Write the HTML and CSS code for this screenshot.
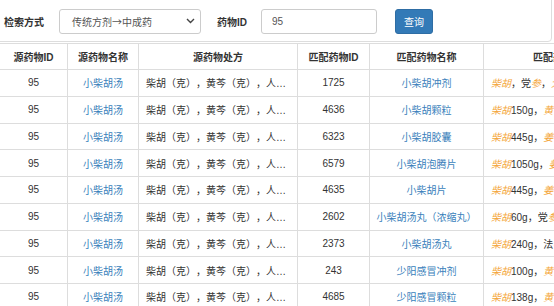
FILE: index.html
```html
<!doctype html>
<html>
<head>
<meta charset="utf-8">
<link rel="stylesheet" href="styles.css">
</head>
<body>
<div class="search-panel">
	<label class="lbl">检索方式</label>
	<div class="sel">
		<span>传统方剂→中成药</span>
		<svg width="9" height="6" viewBox="0 0 9 6"><path d="M1 1l3.5 3.5L8 1" fill="none" stroke="#444" stroke-width="1.4"/></svg>
	</div>
	<label class="lbl lbl-id">药物ID</label>
	<div class="ipt">95</div>
	<button class="btn">查询</button>
</div>
<table class="list">
	<colgroup>
		<col style="width:68px"><col style="width:71px"><col style="width:159px"><col style="width:72px"><col style="width:114px"><col style="width:159px">
	</colgroup>
	<thead>
		<tr><th>源药物ID</th><th>源药物名称</th><th>源药物处方</th><th>匹配药物ID</th><th>匹配药物名称</th><th>匹配药物处方</th></tr>
	</thead>
	<tbody>
		<tr><td>95</td><td><a>小柴胡汤</a></td><td class="rx">柴胡（克），黄芩（克），人参（克），甘草（克），半夏（克）</td><td>1725</td><td><a>小柴胡冲剂</a></td><td class="rx"><em>柴胡</em>，党<em>参</em>，<em>大枣</em>，<em>甘草</em></td></tr>
		<tr><td>95</td><td><a>小柴胡汤</a></td><td class="rx">柴胡（克），黄芩（克），人参（克），甘草（克），半夏（克）</td><td>4636</td><td><a>小柴胡颗粒</a></td><td class="rx"><em>柴胡</em>150g，<em>黄芩</em>56g</td></tr>
		<tr><td>95</td><td><a>小柴胡汤</a></td><td class="rx">柴胡（克），黄芩（克），人参（克），甘草（克），半夏（克）</td><td>6323</td><td><a>小柴胡胶囊</a></td><td class="rx"><em>柴胡</em>445g，<em>姜半夏</em></td></tr>
		<tr><td>95</td><td><a>小柴胡汤</a></td><td class="rx">柴胡（克），黄芩（克），人参（克），甘草（克），半夏（克）</td><td>6579</td><td><a>小柴胡泡腾片</a></td><td class="rx"><em>柴胡</em>1050g，<em>姜半夏</em></td></tr>
		<tr><td>95</td><td><a>小柴胡汤</a></td><td class="rx">柴胡（克），黄芩（克），人参（克），甘草（克），半夏（克）</td><td>4635</td><td><a>小柴胡片</a></td><td class="rx"><em>柴胡</em>445g，<em>姜半夏</em></td></tr>
		<tr><td>95</td><td><a>小柴胡汤</a></td><td class="rx">柴胡（克），黄芩（克），人参（克），甘草（克），半夏（克）</td><td>2602</td><td class="tight"><a>小柴胡汤丸（浓缩丸）</a></td><td class="rx"><em>柴胡</em>60g，党<em>参</em></td></tr>
		<tr><td>95</td><td><a>小柴胡汤</a></td><td class="rx">柴胡（克），黄芩（克），人参（克），甘草（克），半夏（克）</td><td>2373</td><td><a>小柴胡汤丸</a></td><td class="rx"><em>柴胡</em>240g，法<em>半夏</em></td></tr>
		<tr><td>95</td><td><a>小柴胡汤</a></td><td class="rx">柴胡（克），黄芩（克），人参（克），甘草（克），半夏（克）</td><td>243</td><td><a>少阳感冒冲剂</a></td><td class="rx"><em>柴胡</em>100g，<em>黄芩</em></td></tr>
		<tr><td>95</td><td><a>小柴胡汤</a></td><td class="rx">柴胡（克），黄芩（克），人参（克），甘草（克），半夏（克）</td><td>4685</td><td><a>少阳感冒颗粒</a></td><td class="rx"><em>柴胡</em>138g，<em>黄芩</em></td></tr>
	</tbody>
</table>
</body>
</html>
```
FILE: styles.css
```css
* {margin:0; padding:0; box-sizing:border-box;}
body {font-family:"Liberation Sans","Noto Sans CJK SC",sans-serif; font-size:10px; color:#333; background:#fff; overflow:hidden;}

.search-panel {display:flex; align-items:center; width:562px; height:52px; margin:-10px 0 0 -10px; padding:10px 0 0 13px; border:1px solid #ddd; border-radius:4px;}
.lbl {font-weight:bold; color:#333; width:40px;}
.lbl-id {margin-left:16px; width:34px;}
.sel {display:flex; align-items:center; justify-content:space-between; width:142px; height:25px; margin-left:15px; padding:0 5px 0 12px; border:1px solid #ccc; border-radius:3px; color:#555; font-family:"Noto Sans CJK SC",sans-serif;}
.ipt {width:116px; height:25px; line-height:23px; margin-left:10px; padding:0 10px; border:1px solid #ccc; border-radius:3px; color:#555;}
.btn {width:38px; height:25px; margin-left:18px; border:1px solid #2e6da4; border-radius:3px; background:#337ab7; color:#fff; font:inherit;}

.list {border-collapse:collapse; table-layout:fixed; width:643px; margin:1px 0 0 -1px;}
.list th, .list td {border:1px solid #ddd; height:26.75px; padding:0 7px; text-align:center; white-space:nowrap; overflow:hidden; text-overflow:ellipsis;}
.list th {font-weight:bold; height:26px;}
.list a {color:#3a7fbb;}
.list td.rx {text-align:left; text-spacing-trim:space-all;}
.list td.tight {padding:0 2px;}
.list em {color:#f4a63a; font-style:italic;}
```
